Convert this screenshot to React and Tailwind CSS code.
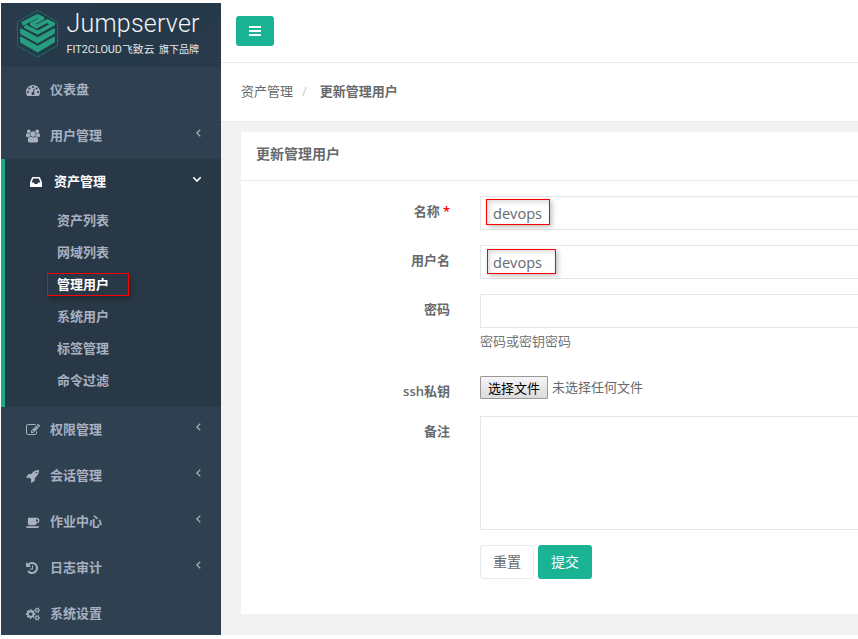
import React from "react";

const ICONS = {
  dashboard: {
    w: 1792,
    d: "M384 1152q0-53-37.5-90.5t-90.5-37.5-90.5 37.5-37.5 90.5 37.5 90.5 90.5 37.5 90.5-37.5 37.5-90.5zm192-448q0-53-37.5-90.5t-90.5-37.5-90.5 37.5-37.5 90.5 37.5 90.5 90.5 37.5 90.5-37.5 37.5-90.5zm428 481l101-382q6-26-7.5-48.5t-38.5-29.5-48 6.5-30 39.5l-101 382q-60 5-107 43.5t-63 98.5q-20 77 20 146t117 89 146-20 89-117q16-60-6-117t-72-91zm660-33q0-53-37.5-90.5t-90.5-37.5-90.5 37.5-37.5 90.5 37.5 90.5 90.5 37.5 90.5-37.5 37.5-90.5zm-640-640q0-53-37.5-90.5t-90.5-37.5-90.5 37.5-37.5 90.5 37.5 90.5 90.5 37.5 90.5-37.5 37.5-90.5zm448 192q0-53-37.5-90.5t-90.5-37.5-90.5 37.5-37.5 90.5 37.5 90.5 90.5 37.5 90.5-37.5 37.5-90.5zm320 448q0 261-141 483-19 29-54 29h-1402q-35 0-54-29-141-221-141-483 0-182 71-348t191-286 286-191 348-71 348 71 286 191 191 286 71 348z",
  },
  users: {
    w: 1920,
    d: "M593 896q-162 5-265 128h-134q-82 0-138-40.5t-56-118.5q0-353 124-353 6 0 43.5 21t97.5 42.5 119 21.5q67 0 133-23-5 37-5 66 0 139 81 256zm1071 637q0 120-73 189.5t-194 69.5h-874q-121 0-194-69.5t-73-189.5q0-53 3.5-103.5t14-109 26.5-108.5 43-97.5 62-81 85.5-53.5 111.5-20q10 0 43 21.5t73 48 107 48 135 21.5 135-21.5 107-48 73-48 43-21.5q61 0 111.5 20t85.5 53.5 62 81 43 97.5 26.5 108.5 14 109 3.5 103.5zm-1024-1277q0 106-75 181t-181 75-181-75-75-181 75-181 181-75 181 75 75 181zm704 384q0 159-112.5 271.5t-271.5 112.5-271.5-112.5-112.5-271.5 112.5-271.5 271.5-112.5 271.5 112.5 112.5 271.5zm576 225q0 78-56 118.5t-138 40.5h-134q-103-123-265-128 81-117 81-256 0-29-5-66 66 23 133 23 59 0 119-21.5t97.5-42.5 43.5-21q124 0 124 353zm-128-609q0 106-75 181t-181 75-181-75-75-181 75-181 181-75 181 75 75 181z",
  },
  inbox: {
    w: 1792,
    d: "M1151 960h316q-1-3-2.5-8.5t-2.5-7.5l-212-496h-708l-212 496q-1 3-2.5 8.5t-2.5 7.5h316l95 192h320zm513 30v482q0 26-19 45t-45 19h-1408q-26 0-45-19t-19-45v-482q0-62 25-123l238-552q10-25 36.5-42t52.5-17h832q26 0 52.5 17t36.5 42l238 552q25 61 25 123z",
  },
  edit: {
    w: 1792,
    d: "M888 1184l116-116-152-152-116 116v56h96v96h56zm440-720q-16-16-33 1l-350 350q-17 17-1 33t33-1l350-350q17-17 1-33zm80 594v190q0 119-84.5 203.5t-203.5 84.5h-832q-119 0-203.5-84.5t-84.5-203.5v-832q0-119 84.5-203.5t203.5-84.5h832q63 0 117 25 15 7 18 23 3 17-9 29l-49 49q-14 14-32 8-23-6-45-6h-832q-66 0-113 47t-47 113v832q0 66 47 113t113 47h832q66 0 113-47t47-113v-126q0-13 9-22l64-64q15-15 35-7t20 29zm-96-738l288 288-672 672h-288v-288zm444 132l-92 92-288-288 92-92q28-28 68-28t68 28l152 152q28 28 28 68t-28 68z",
  },
  rocket: {
    w: 1792,
    d: "M1440 448q0-40-28-68t-68-28-68 28-28 68 28 68 68 28 68-28 28-68zm224-288q0 249-75.5 430.5t-253.5 360.5q-81 80-195 176l-20 379q-2 16-16 26l-384 224q-7 4-16 4-12 0-23-9l-64-64q-13-14-8-32l85-276-281-281-276 85q-3 1-9 1-14 0-23-9l-64-64q-17-19-5-39l224-384q10-14 26-16l379-20q96-114 176-195 188-187 358-258t431-71q14 0 24 9.5t10 22.5z",
  },
  coffee: {
    w: 1920,
    d: "M1664 704q0-80-56-136t-136-56h-64v384h64q80 0 136-56t56-136zm-1664 768h1792q0 106-75 181t-181 75h-1280q-106 0-181-75t-75-181zm1856-768q0 159-112.5 271.5t-271.5 112.5h-64v32q0 92-66 158t-158 66h-704q-92 0-158-66t-66-158v-736q0-26 19-45t45-19h1152q159 0 271.5 112.5t112.5 271.5z",
  },
  history: {
    w: 1792,
    d: "M1536 896q0 156-61 298t-164 245-245 164-298 61q-172 0-327-72.5t-264-204.5q-7-10-6.5-22.5t8.5-20.5l137-138q10-9 25-9 16 2 23 12 73 95 179 147t225 52q104 0 198.5-40.5t163.5-109.5 109.5-163.5 40.5-198.5-40.5-198.5-109.5-163.5-163.5-109.5-198.5-40.5q-98 0-188 35.5t-160 101.5l137 138q31 30 14 69-17 40-59 40h-448q-26 0-45-19t-19-45v-448q0-42 40-59 39-17 69 14l130 129q107-101 244.5-156.5t284.5-55.5q156 0 298 61t245 164 164 245 61 298zm-640-288v448q0 14-9 23t-23 9h-320q-14 0-23-9t-9-23v-64q0-14 9-23t23-9h224v-352q0-14 9-23t23-9h64q14 0 23 9t9 23z",
  },
  cogs: {
    w: 1920,
    d: "M896 896q0-106-75-181t-181-75-181 75-75 181 75 181 181 75 181-75 75-181zm768 512q0-52-38-90t-90-38-90 38-38 90q0 53 37.5 90.5t90.5 37.5 90.5-37.5 37.5-90.5zm0-1024q0-52-38-90t-90-38-90 38-38 90q0 53 37.5 90.5t90.5 37.5 90.5-37.5 37.5-90.5zm-384 421v185q0 10-7 19.5t-16 10.5l-155 24q-11 35-32 76 34 48 90 115 7 11 7 20 0 12-7 19-23 30-82.5 89.5t-78.5 59.5q-11 0-21-7l-115-90q-37 19-77 31-11 108-23 155-7 24-30 24h-186q-11 0-20-7.5t-10-17.5l-23-153q-34-10-75-31l-118 89q-7 7-20 7-11 0-21-8-144-133-144-160 0-9 7-19 10-14 41-53t47-61q-23-44-35-82l-152-24q-10-1-17-9.5t-7-19.5v-185q0-10 7-19.5t16-10.5l155-24q11-35 32-76-34-48-90-115-7-11-7-20 0-12 7-20 22-30 82-89t79-59q11 0 21 7l115 90q34-18 77-32 11-108 23-154 7-24 30-24h186q11 0 20 7.5t10 17.5l23 153q34 10 75 31l118-89q8-7 20-7 11 0 21 8 144 133 144 160 0 8-7 19-12 16-42 54t-45 60q23 48 34 82l152 23q10 2 17 10.5t7 19.5zm640 533v140q0 16-149 31-12 27-30 52 51 113 51 138 0 4-4 7-122 71-124 71-8 0-46-47t-52-68q-20 2-30 2t-30-2q-14 21-52 68t-46 47q-2 0-124-71-4-3-4-7 0-25 51-138-18-25-30-52-149-15-149-31v-140q0-16 149-31 13-29 30-52-51-113-51-138 0-4 4-7 4-2 35-20t59-34 30-16q8 0 46 46.5t52 67.5q20-2 30-2t30 2q51-71 92-112l6-2q4 0 124 70 4 3 4 7 0 25-51 138 17 23 30 52 149 15 149 31zm0-1024v140q0 16-149 31-12 27-30 52 51 113 51 138 0 4-4 7-122 71-124 71-8 0-46-47t-52-68q-20 2-30 2t-30-2q-14 21-52 68t-46 47q-2 0-124-71-4-3-4-7 0-25 51-138-18-25-30-52-149-15-149-31v-140q0-16 149-31 13-29 30-52-51-113-51-138 0-4 4-7 4-2 35-20t59-34 30-16q8 0 46 46.5t52 67.5q20-2 30-2t30 2q51-71 92-112l6-2q4 0 124 70 4 3 4 7 0 25-51 138 17 23 30 52 149 15 149 31z",
  },
};

function Icon({ name }) {
  const icon = ICONS[name];
  return (
    <svg className="mt-0.5 h-[14px] w-[14px] shrink-0 overflow-visible" viewBox={`0 0 ${icon.w} 1792`} preserveAspectRatio="xMinYMid meet" fill="currentColor">
      <path d={icon.d} />
    </svg>
  );
}

function Angle({ open }) {
  return (
    <svg className="mb-1 ml-auto h-2.5 w-2.5" viewBox="0 0 10 10" fill="none" stroke="currentColor" strokeWidth={open ? 1.6 : 1.3}>
      <path d={open ? "M1.3 3.3 5 7l3.7-3.7" : "M8.3 1.6 4.9 5l3.4 3.4"} />
    </svg>
  );
}

function NavItem({ icon, label, arrow }) {
  return (
    <a className="flex h-[46px] shrink-0 items-center pr-[19px] pb-0.5 pl-[25px]">
      <Icon name={icon} />
      <span className="ml-[10px]">{label}</span>
      {arrow && <Angle />}
    </a>
  );
}

function Logo() {
  return (
    <svg className="h-16 w-[220px] shrink-0" viewBox="1 3 220 64">
      <rect x="1" y="3" width="220" height="64" fill="#263949" />
      <path d="M1 3h95L34 67H1zM150 67l71-50v50z" fill="#293c4c" opacity=".6" />
      <path d="M37.500 10.500 57.500 22v23.500L37.500 57 17.500 45.500V22z" fill="#213c49" stroke="#23806f" strokeWidth="0.9" strokeDasharray="2.200 0.700" />
      <g transform="scale(.33333)" fill="#279e80" stroke="#279e80" strokeLinejoin="round">
        <path d="M66 72 113 48l15 7-33 17 14 8 32-17 19 9-47 26-39-20" fill="none" strokeWidth="11" strokeLinecap="butt" />
        <path d="M62 86 113 113 163 86v14L113 129 62 101z" strokeWidth="3" />
        <path d="M62 111 113 139 163 111v15L113 156 62 127z" strokeWidth="3" />
      </g>
      <text x="66.500" y="32" textLength="133" lengthAdjust="spacing" fontSize="25" fill="#f4f6f7" className="font-['Roboto',sans-serif] font-light">Jumpserver</text>
      <g fontSize="10.500" fill="#e3e7ea" className="font-['Roboto','Noto_Sans_CJK_SC',sans-serif] font-normal">
        <text x="66.500" y="53" textLength="88" lengthAdjust="spacingAndGlyphs">FIT2CLOUD飞致云</text>
        <text x="159" y="53" textLength="40" lengthAdjust="spacingAndGlyphs">旗下品牌</text>
      </g>
    </svg>
  );
}

const SUB_ITEMS = ["资产列表", "网域列表", "管理用户", "系统用户", "标签管理", "命令过滤"];

function Sidebar() {
  return (
    <nav className="flex w-[220px] shrink-0 flex-col overflow-hidden bg-[#2f4050] font-semibold text-[#a7b1c2]">
      <Logo />
      <NavItem icon="dashboard" label="仪表盘" />
      <NavItem icon="users" label="用户管理" arrow />
      <div className="h-[248px] shrink-0 border-l-4 border-[#19aa8d] bg-[#293846]">
        <a className="flex h-[46px] items-center pr-[19px] pb-0.5 pl-[24px] text-white">
          <Icon name="inbox" />
          <span className="ml-[11px]">资产管理</span>
          <Angle open />
        </a>
        {SUB_ITEMS.map((item) => (
          <a key={item} className={item === "管理用户" ? "relative flex h-8 items-center pb-0.5 pl-[52px] text-white" : "flex h-8 items-center pb-0.5 pl-[52px]"}>
            {item}
            {item === "管理用户" && (
              <span className="absolute top-[4px] left-[42px] h-[23px] w-[82px] border border-[#ff0000] shadow-[2px_3px_5px_rgba(0,0,0,0.25)]" />
            )}
          </a>
        ))}
      </div>
      <NavItem icon="edit" label="权限管理" arrow />
      <NavItem icon="rocket" label="会话管理" arrow />
      <NavItem icon="coffee" label="作业中心" arrow />
      <NavItem icon="history" label="日志审计" arrow />
      <NavItem icon="cogs" label="系统设置" />
    </nav>
  );
}

function Row({ label, children, className }) {
  return (
    <div className={`flex ${className}`}>
      <label className="w-[209px] shrink-0 pt-[5px] text-right font-semibold">{label}</label>
      <div className="ml-[30px] grow">{children}</div>
    </div>
  );
}

const FIELD = "relative flex h-[34px] items-center border border-r-0 border-[#e5e6e7] pl-3 text-[14.6px]";

export default function App() {
  return (
    <div className="flex h-[639px] w-[858px] overflow-hidden bg-white pt-[3px] pb-1 pl-px font-['Open_Sans','Noto_Sans_CJK_SC',sans-serif] text-[13px] leading-5 text-[#676a6c]">
      <Sidebar />
      <main className="flex min-w-0 grow flex-col bg-[#f2f2f2]">
        <header className="h-[60px] shrink-0 border-b border-[#e7eaec] bg-white pt-[13px] pl-[15px]">
          <button className="flex h-[30px] w-[38px] items-center justify-center rounded-[3px] bg-[#1ab394]">
            <span className="flex w-3 flex-col gap-[2px]">
              <i className="h-[2px] bg-white" />
              <i className="h-[2px] bg-white" />
              <i className="h-[2px] bg-white" />
            </span>
          </button>
        </header>
        <div className="flex h-[59px] shrink-0 items-center border-b border-[#e7e8e9] bg-white pb-0.5 pl-5">
          <span>资产管理</span>
          <span className="ml-[9px] text-[#c8c8c8]">/</span>
          <span className="ml-[13px] font-semibold">更新管理用户</span>
        </div>
        <section className="mt-[10px] ml-5 flex h-[482px] shrink-0 flex-col bg-white">
          <h5 className="flex h-[49px] shrink-0 items-center border-b border-[#e7e8e9] pb-1 pl-[15px] text-sm font-semibold">更新管理用户</h5>
          <Row className="mt-[15px] h-[49px]" label={<span className="flex justify-end gap-[3px]"><span>名称</span><span className="text-[#ff0000]">*</span></span>}>
            <div className={FIELD}>
              devops
              <span className="absolute top-[2px] left-[5px] h-[26px] w-[64px] border border-[#ff0000] shadow-[2px_2px_5px_rgba(0,0,0,0.25),inset_2px_2px_5px_rgba(0,0,0,0.15)]" />
            </div>
          </Row>
          <Row className="h-[49px]" label="用户名">
            <div className={FIELD}>
              devops
              <span className="absolute top-[3px] left-[6px] h-[25px] w-[69px] border border-[#ff0000] shadow-[2px_2px_5px_rgba(0,0,0,0.25),inset_2px_2px_5px_rgba(0,0,0,0.15)]" />
            </div>
          </Row>
          <Row className="h-[82px]" label="密码">
            <div className={FIELD} />
            <p className="mt-[3px] text-[#737373]">密码或密钥密码</p>
          </Row>
          <Row className="h-[40px]" label="ssh私钥">
            <div className="flex items-center">
              <span className="flex h-[23px] w-[68px] items-center justify-center rounded-[1px] border border-[#999] bg-linear-to-b from-[#f5f5f5] to-[#dcdcdc] text-black">选择文件</span>
              <span className="-mt-px ml-1">未选择任何文件</span>
            </div>
          </Row>
          <Row className="h-[129px]" label="备注">
            <div className="h-[114px] border border-r-0 border-[#e5e6e7]" />
          </Row>
          <div className="ml-[239px] flex gap-1 text-sm">
            <button className="h-[34px] w-[54px] rounded-[3px] border border-[#e7eaec]">重置</button>
            <button className="h-[34px] w-[54px] rounded-[3px] bg-[#1ab394] text-white">提交</button>
          </div>
        </section>
      </main>
    </div>
  );
}
